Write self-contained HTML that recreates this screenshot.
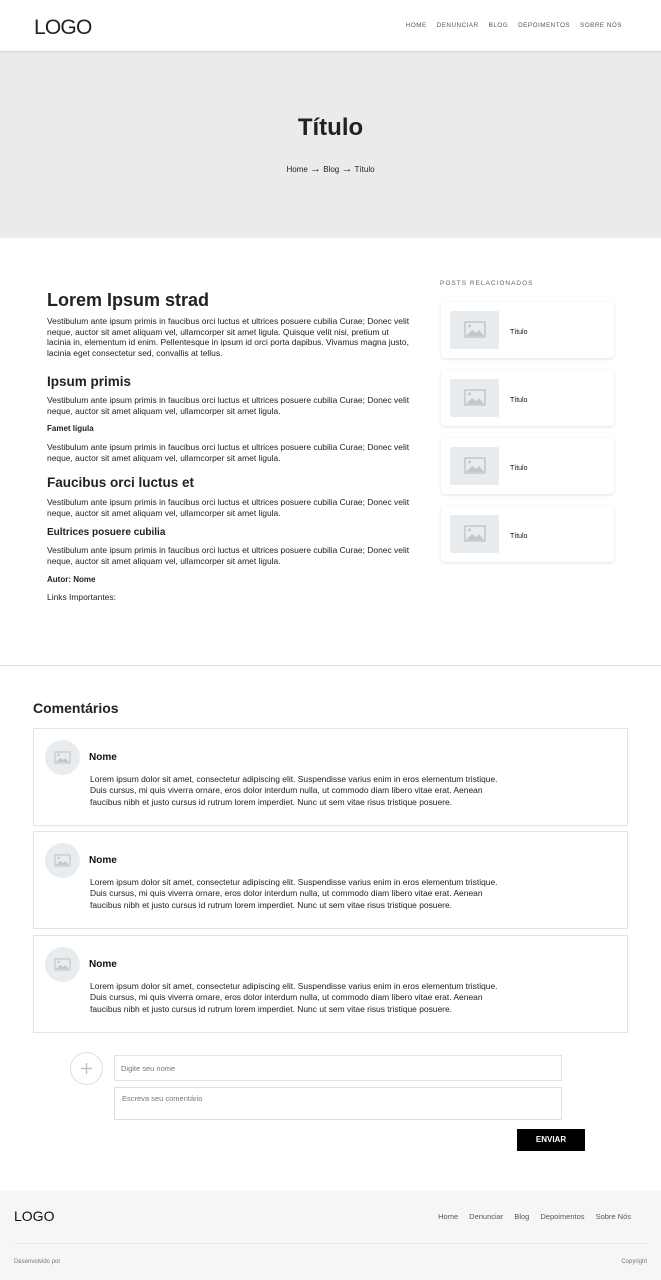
<!DOCTYPE html>
<html><head><meta charset="utf-8"><style>
*{margin:0;padding:0;box-sizing:border-box}
body{width:661px;height:1280px;position:relative;background:#fff;font-family:"Liberation Sans",sans-serif;color:#222;overflow:hidden}
.a{position:absolute;white-space:nowrap}
.p{font-size:8.45px;line-height:10.7px;color:#222}
.hdr{position:absolute;left:0;top:0;width:661px;height:51px;background:#fff;box-shadow:0 1px 2px rgba(0,0,0,.12);z-index:2}
.nav span{margin-left:10px}
.card{position:absolute;left:441px;width:173px;height:56px;background:#fff;border-radius:4px;box-shadow:0 1px 3px rgba(0,0,0,.12)}
.card .im{position:absolute;left:9px;top:9px;width:49px;height:38px;background:#e8ecee;border-radius:2px}
.card .t{position:absolute;left:69px;top:27px;font-size:7px;color:#111}
.cm{position:absolute;left:33px;width:595px;height:98px;border:1px solid #e3e3e3;background:#fff}
.av{position:absolute;left:11px;top:11px;width:35px;height:35px;border-radius:50%;background:#e8ecee}
.cm .n{position:absolute;left:55px;top:23px;font-size:10px;font-weight:bold;color:#111}
.cm .x{position:absolute;left:56px;top:45px;font-size:8.45px;line-height:11.3px;white-space:nowrap;color:#222}
</style></head><body>
<div class="hdr">
<div class="a" style="left:34px;top:16px;font-size:21px;color:#222;letter-spacing:-0.8px">LOGO</div>
<div class="a nav" style="right:39px;top:22px;font-size:6.3px;letter-spacing:.5px;color:#555"><span>HOME</span><span>DENUNCIAR</span><span>BLOG</span><span>DEPOIMENTOS</span><span>SOBRE NÓS</span></div>
</div>
<div class="a" style="left:0;top:51px;width:661px;height:187px;background:#ebebeb"></div>
<div class="a" style="left:0;top:114px;width:661px;text-align:center;font-size:24px;font-weight:bold;color:#222">Título</div>
<div class="a" style="left:0;top:163px;width:661px;text-align:center;font-size:8px;color:#222">Home <span style="font-size:11px">→</span> Blog <span style="font-size:11px">→</span> Título</div>

<div class="a" style="left:47px;top:290px;font-size:18px;font-weight:bold">Lorem Ipsum strad</div>
<div class="a p" style="left:47px;top:316px">Vestibulum ante ipsum primis in faucibus orci luctus et ultrices posuere cubilia Curae; Donec velit<br>neque, auctor sit amet aliquam vel, ullamcorper sit amet ligula. Quisque velit nisi, pretium ut<br>lacinia in, elementum id enim. Pellentesque in ipsum id orci porta dapibus. Vivamus magna justo,<br>lacinia eget consectetur sed, convallis at tellus.</div>
<div class="a" style="left:47px;top:374px;font-size:13.5px;font-weight:bold">Ipsum primis</div>
<div class="a p" style="left:47px;top:395px">Vestibulum ante ipsum primis in faucibus orci luctus et ultrices posuere cubilia Curae; Donec velit<br>neque, auctor sit amet aliquam vel, ullamcorper sit amet ligula.</div>
<div class="a" style="left:47px;top:424px;font-size:8px;font-weight:bold">Famet ligula</div>
<div class="a p" style="left:47px;top:442px">Vestibulum ante ipsum primis in faucibus orci luctus et ultrices posuere cubilia Curae; Donec velit<br>neque, auctor sit amet aliquam vel, ullamcorper sit amet ligula.</div>
<div class="a" style="left:47px;top:475px;font-size:13.5px;font-weight:bold">Faucibus orci luctus et</div>
<div class="a p" style="left:47px;top:497px">Vestibulum ante ipsum primis in faucibus orci luctus et ultrices posuere cubilia Curae; Donec velit<br>neque, auctor sit amet aliquam vel, ullamcorper sit amet ligula.</div>
<div class="a" style="left:47px;top:527px;font-size:10px;font-weight:bold">Eultrices posuere cubilia</div>
<div class="a p" style="left:47px;top:545px">Vestibulum ante ipsum primis in faucibus orci luctus et ultrices posuere cubilia Curae; Donec velit<br>neque, auctor sit amet aliquam vel, ullamcorper sit amet ligula.</div>
<div class="a" style="left:47px;top:575px;font-size:8px;font-weight:bold">Autor: Nome</div>
<div class="a" style="left:47px;top:592px;font-size:8.45px">Links Importantes:</div>

<div class="a" style="left:440px;top:280px;font-size:6.5px;letter-spacing:1px;color:#666">POSTS RELACIONADOS</div>
<div class="card" style="top:302px"><div class="im"><svg width="49" height="38"><rect x="15" y="11" width="20" height="15" fill="none" stroke="#c3c7c9" stroke-width="1.5"/><circle cx="19.5" cy="15" r="1.5" fill="#c3c7c9"/><path d="M16 25l6-6 4 3 3-3 5 6z" fill="#c3c7c9"/></svg></div><div class="t">Título</div></div>
<div class="card" style="top:370px"><div class="im"><svg width="49" height="38"><rect x="15" y="11" width="20" height="15" fill="none" stroke="#c3c7c9" stroke-width="1.5"/><circle cx="19.5" cy="15" r="1.5" fill="#c3c7c9"/><path d="M16 25l6-6 4 3 3-3 5 6z" fill="#c3c7c9"/></svg></div><div class="t">Título</div></div>
<div class="card" style="top:438px"><div class="im"><svg width="49" height="38"><rect x="15" y="11" width="20" height="15" fill="none" stroke="#c3c7c9" stroke-width="1.5"/><circle cx="19.5" cy="15" r="1.5" fill="#c3c7c9"/><path d="M16 25l6-6 4 3 3-3 5 6z" fill="#c3c7c9"/></svg></div><div class="t">Título</div></div>
<div class="card" style="top:506px"><div class="im"><svg width="49" height="38"><rect x="15" y="11" width="20" height="15" fill="none" stroke="#c3c7c9" stroke-width="1.5"/><circle cx="19.5" cy="15" r="1.5" fill="#c3c7c9"/><path d="M16 25l6-6 4 3 3-3 5 6z" fill="#c3c7c9"/></svg></div><div class="t">Título</div></div>

<div class="a" style="left:0;top:665px;width:661px;height:1px;background:#e2e2e2"></div>
<div class="a" style="left:33px;top:700px;font-size:14px;font-weight:bold;color:#222">Comentários</div>

<div class="cm" style="top:728px"><div class="av"><svg width="35" height="35"><rect x="10" y="12" width="15" height="11" fill="none" stroke="#c3c7c9" stroke-width="1.2"/><circle cx="13.5" cy="15" r="1.2" fill="#c3c7c9"/><path d="M11 22l4-4 3 2 2-2 4 4z" fill="#c3c7c9"/></svg></div><div class="n">Nome</div><div class="x">Lorem ipsum dolor sit amet, consectetur adipiscing elit. Suspendisse varius enim in eros elementum tristique.<br>Duis cursus, mi quis viverra ornare, eros dolor interdum nulla, ut commodo diam libero vitae erat. Aenean<br>faucibus nibh et justo cursus id rutrum lorem imperdiet. Nunc ut sem vitae risus tristique posuere.</div></div>
<div class="cm" style="top:831px"><div class="av"><svg width="35" height="35"><rect x="10" y="12" width="15" height="11" fill="none" stroke="#c3c7c9" stroke-width="1.2"/><circle cx="13.5" cy="15" r="1.2" fill="#c3c7c9"/><path d="M11 22l4-4 3 2 2-2 4 4z" fill="#c3c7c9"/></svg></div><div class="n">Nome</div><div class="x">Lorem ipsum dolor sit amet, consectetur adipiscing elit. Suspendisse varius enim in eros elementum tristique.<br>Duis cursus, mi quis viverra ornare, eros dolor interdum nulla, ut commodo diam libero vitae erat. Aenean<br>faucibus nibh et justo cursus id rutrum lorem imperdiet. Nunc ut sem vitae risus tristique posuere.</div></div>
<div class="cm" style="top:935px"><div class="av"><svg width="35" height="35"><rect x="10" y="12" width="15" height="11" fill="none" stroke="#c3c7c9" stroke-width="1.2"/><circle cx="13.5" cy="15" r="1.2" fill="#c3c7c9"/><path d="M11 22l4-4 3 2 2-2 4 4z" fill="#c3c7c9"/></svg></div><div class="n">Nome</div><div class="x">Lorem ipsum dolor sit amet, consectetur adipiscing elit. Suspendisse varius enim in eros elementum tristique.<br>Duis cursus, mi quis viverra ornare, eros dolor interdum nulla, ut commodo diam libero vitae erat. Aenean<br>faucibus nibh et justo cursus id rutrum lorem imperdiet. Nunc ut sem vitae risus tristique posuere.</div></div>

<div class="a" style="left:70px;top:1052px;width:33px;height:33px;border:1px solid #ddd;border-radius:50%"><svg width="31" height="31"><path d="M15.5 10v11M10 15.5h11" stroke="#bbb" stroke-width="1.3"/></svg></div>
<div class="a" style="left:114px;top:1055px;width:448px;height:26px;border:1px solid #e3e3e3;font-size:7.5px;color:#777;padding:8px 6px">Digite seu nome</div>
<div class="a" style="left:114px;top:1087px;width:448px;height:33px;border:1px solid #ddd;font-size:7.5px;color:#777;padding:6px 7px">Escreva seu comentário</div>
<div class="a" style="left:517px;top:1129px;width:68px;height:22px;background:#000;color:#fff;font-size:8px;font-weight:bold;text-align:center;line-height:22px">ENVIAR</div>

<div class="a" style="left:0;top:1191px;width:661px;height:89px;background:#f6f6f7"></div>
<div class="a" style="left:14px;top:1208px;font-size:14px;color:#111">LOGO</div>
<div class="a" style="right:30px;top:1212px;font-size:7.5px;color:#556"><span>Home</span><span style="margin-left:11px">Denunciar</span><span style="margin-left:11px">Blog</span><span style="margin-left:11px">Depoimentos</span><span style="margin-left:11px">Sobre Nós</span></div>
<div class="a" style="left:14px;top:1243px;width:632px;height:1px;background:#e6e6ee"></div>
<div class="a" style="left:14px;top:1259px;font-size:6px;color:#777">Desenvolvido por</div>
<div class="a" style="right:14px;top:1259px;font-size:6px;color:#777">Copyright</div>
</body></html>
